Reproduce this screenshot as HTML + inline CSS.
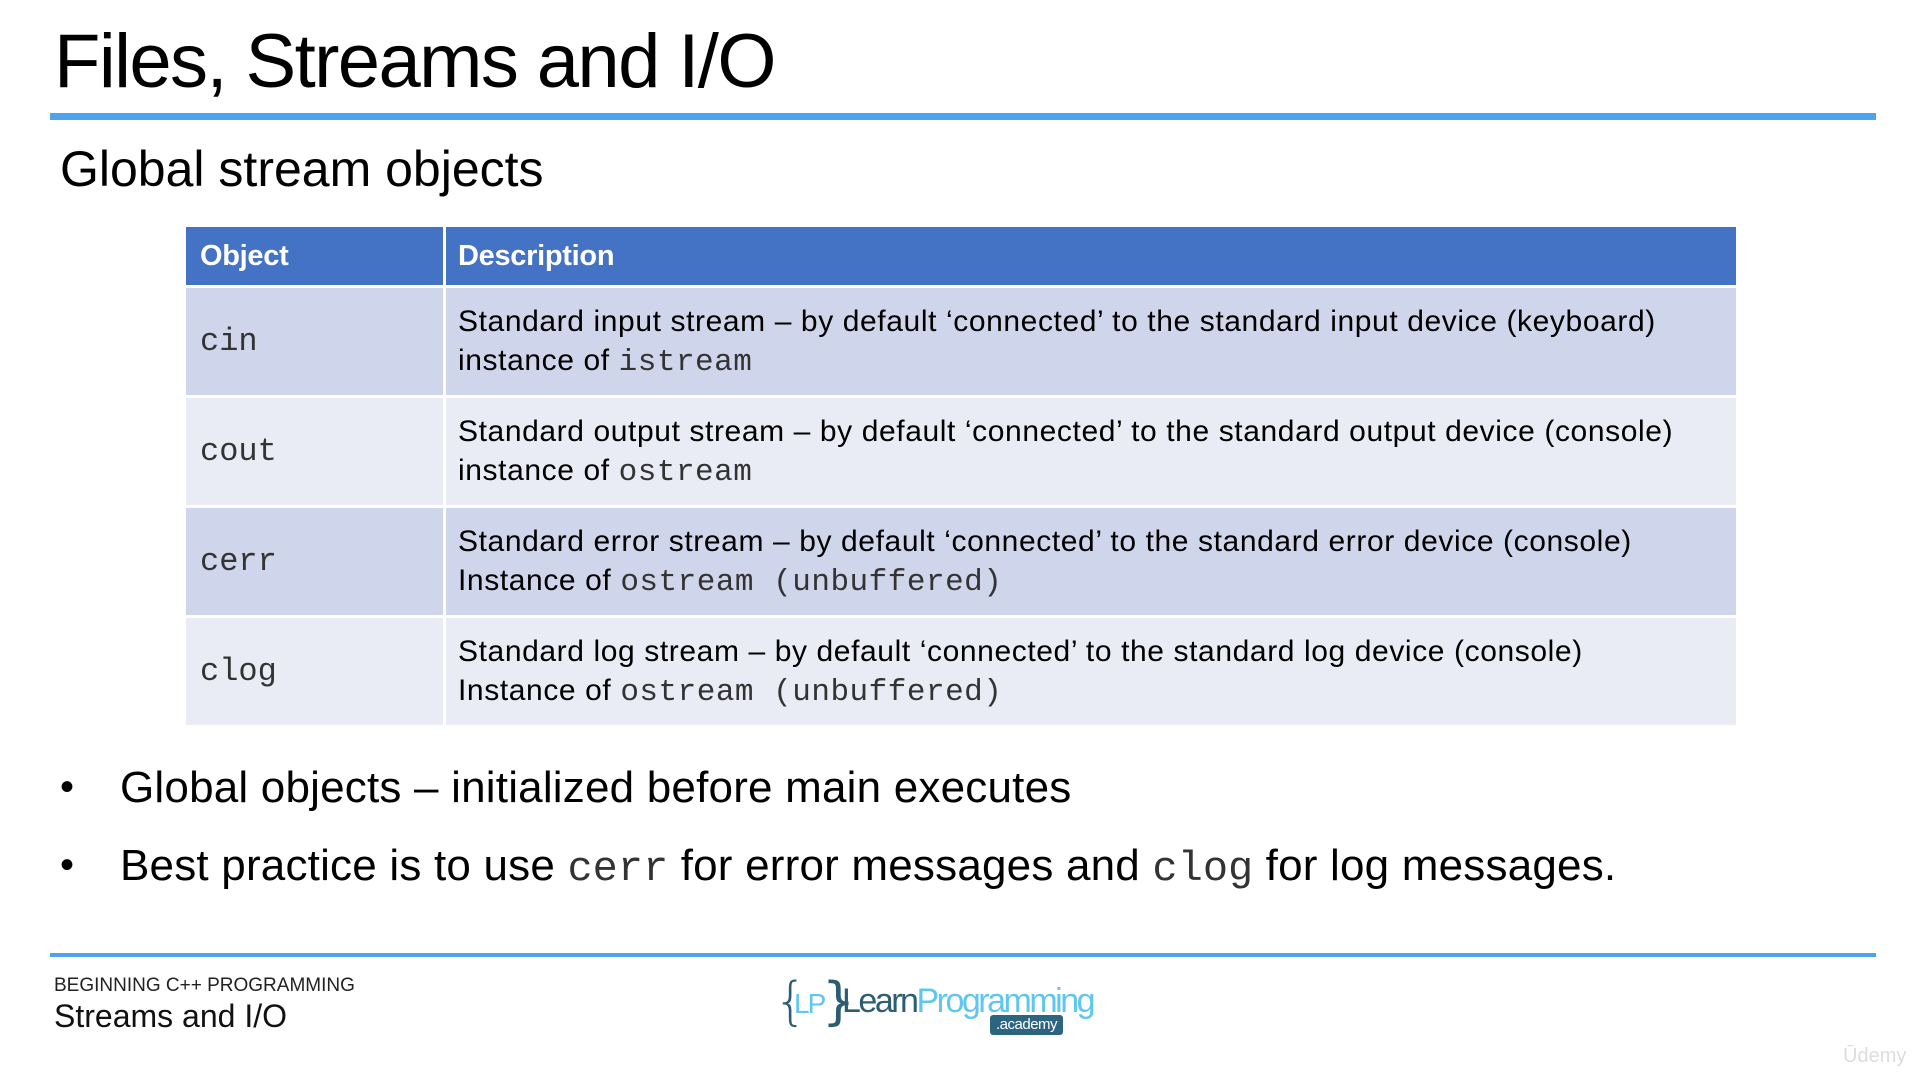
<!DOCTYPE html>
<html><head><meta charset="utf-8"><style>
body{margin:0;width:1920px;height:1080px;background:#fff;position:relative;overflow:hidden;font-family:"Liberation Sans",sans-serif;color:#000}
.a{position:absolute;white-space:nowrap}
.mono{font-family:"Liberation Mono",monospace}
table{position:absolute;left:183px;top:224px;width:1556px;border-collapse:collapse}
td{padding:0 0 0 12px;border:3px solid #fff;font-size:30px;letter-spacing:0.6px;line-height:39px}
td.o{width:243px;font-family:"Liberation Mono",monospace;font-size:32px;color:#333;letter-spacing:0;padding-left:14px}
tr.h td{background:#4472c4;color:#fff;font-weight:bold;height:58px;font-size:29px;letter-spacing:-0.3px}
tr.r1 td{background:#cfd5ea;height:107px}
tr.r2 td{background:#e9ebf5;height:107px}
td .m{font-family:"Liberation Mono",monospace;font-size:31px;color:#333;letter-spacing:0.5px}
</style></head><body>
<div class="a" style="left:54px;top:18px;font-size:76px;letter-spacing:-1.6px">Files, Streams and I/O</div>
<div style="position:absolute;left:50px;top:113px;width:1826px;height:7px;background:#4da3f0"></div>
<div class="a" style="left:60px;top:140px;font-size:50px;letter-spacing:0">Global stream objects</div>
<table>
<tr class="h"><td style="width:243px;padding-left:14px">Object</td><td>Description</td></tr>
<tr class="r1"><td class="o">cin</td><td>Standard input stream – by default ‘connected’ to the standard input device (keyboard)<br>instance of <span class="m">istream</span></td></tr>
<tr class="r2"><td class="o">cout</td><td>Standard output stream – by default ‘connected’ to the standard output device (console)<br>instance of <span class="m">ostream</span></td></tr>
<tr class="r1"><td class="o">cerr</td><td>Standard error stream – by default ‘connected’ to the standard error device (console)<br>Instance of <span class="m">ostream (unbuffered)</span></td></tr>
<tr class="r2"><td class="o">clog</td><td>Standard log stream – by default ‘connected’ to the standard log device (console)<br>Instance of <span class="m">ostream (unbuffered)</span></td></tr>
</table>
<div class="a" style="left:60px;top:765px;font-size:40px">•</div>
<div class="a" style="left:120px;top:763px;font-size:44px;letter-spacing:0.2px">Global objects – initialized before main executes</div>
<div class="a" style="left:60px;top:843px;font-size:40px">•</div>
<div class="a" style="left:120px;top:841px;font-size:44px;letter-spacing:0.2px">Best practice is to use <span class="mono" style="font-size:42px;color:#333;letter-spacing:0">cerr</span> for error messages and <span class="mono" style="font-size:42px;color:#333;letter-spacing:0">clog</span> for log messages.</div>
<div style="position:absolute;left:50px;top:953px;width:1826px;height:4px;background:#4da3f0"></div>
<div class="a" style="left:54px;top:975px;font-size:19px;color:#222">BEGINNING C++ PROGRAMMING</div>
<div class="a" style="left:54px;top:998px;font-size:32px;color:#111;letter-spacing:0">Streams and I/O</div>
<div class="a" style="left:774px;top:972px;font-size:52px;color:#2d5d73;font-family:'DejaVu Sans',sans-serif;font-weight:300">{</div>
<div class="a" style="left:794px;top:988px;font-size:28px;color:#5fc7ef;letter-spacing:-2px">LP</div>
<div class="a" style="left:822px;top:972px;font-size:52px;color:#2d5d73;font-family:'DejaVu Sans',sans-serif">}</div>
<div class="a" style="left:842px;top:982px;font-size:34px;letter-spacing:-2.5px"><span style="color:#2d5d73">Learn</span><span style="color:#5fc7ef">Programming</span></div>
<div class="a" style="left:990px;top:1015px;background:#2d6580;border-radius:3px;color:#fff;font-size:15px;padding:0 6px;line-height:20px;letter-spacing:-0.5px">.academy</div>
<div class="a" style="left:1843px;top:1045px;font-size:20px;color:#ddd">Ūdemy</div>
</body></html>
